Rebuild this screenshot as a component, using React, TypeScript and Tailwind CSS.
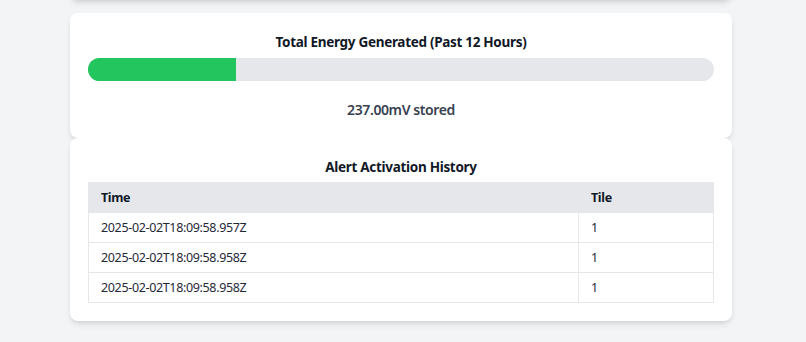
import React from "react";

interface Activation {
  time: string;
  tile: number;
}

const ACTIVATIONS: Activation[] = [
  { time: "2025-02-02T18:09:58.957Z", tile: 1 },
  { time: "2025-02-02T18:09:58.958Z", tile: 1 },
  { time: "2025-02-02T18:09:58.958Z", tile: 1 },
];

const stored = 237.0;
const pct = 23.6;

export default function App() {
  return (
    <div
      className="min-h-screen bg-[#f3f4f6] overflow-hidden"
      style={{ fontFamily: "'Noto Sans', 'Open Sans', sans-serif" }}
    >
      <div className="w-[662px] ml-[70px]">
        {/* tail of the card above, scrolled out of view */}
        <div className="h-[40px] -mt-[40px] mb-[13px] bg-white rounded-lg shadow-md" />

        {/* Energy card */}
        <div className="bg-white rounded-lg shadow-md p-[18px]">
          <h2 className="text-center text-[13.5px] leading-[22px] font-bold tracking-[-0.3px] text-[#111827]">
            Total Energy Generated (Past 12 Hours)
          </h2>
          <div className="mt-[5px] h-[23px] w-full rounded-full bg-[#e5e7eb] overflow-hidden">
            <div className="h-full bg-[#22c55e]" style={{ width: `${pct}%` }} />
          </div>
          <p className="mt-[18px] text-center text-[14px] leading-[21px] font-semibold tracking-[-0.4px] text-[#374151]">
            {stored.toFixed(2)}mV stored
          </p>
        </div>

        {/* Alert history card */}
        <div className="bg-white rounded-lg shadow-md p-[18px]">
          <h2 className="text-center text-[13.5px] leading-[22px] font-bold tracking-[-0.3px] text-[#111827] mb-[4px]">
            Alert Activation History
          </h2>
          <table className="w-full border-collapse text-[12.5px] tracking-[-0.35px] text-[#1f2937]">
            <thead>
              <tr className="bg-[#e5e7eb] h-[30px]">
                <th className="text-left font-bold text-[#111827] px-3 pt-[2px] border border-[#e5e7eb]">Time</th>
                <th className="text-left font-bold text-[#111827] px-3 pt-[2px] w-[135px] border border-[#e5e7eb] border-l-[#d1d5db]">
                  Tile
                </th>
              </tr>
            </thead>
            <tbody>
              {ACTIVATIONS.map((a, i) => (
                <tr key={i} className="h-[30px]">
                  <td className="px-3 pt-[2px] border border-[#e5e7eb]">{a.time}</td>
                  <td className="px-3 pt-[2px] border border-[#e5e7eb]">{a.tile}</td>
                </tr>
              ))}
            </tbody>
          </table>
        </div>
      </div>
    </div>
  );
}
